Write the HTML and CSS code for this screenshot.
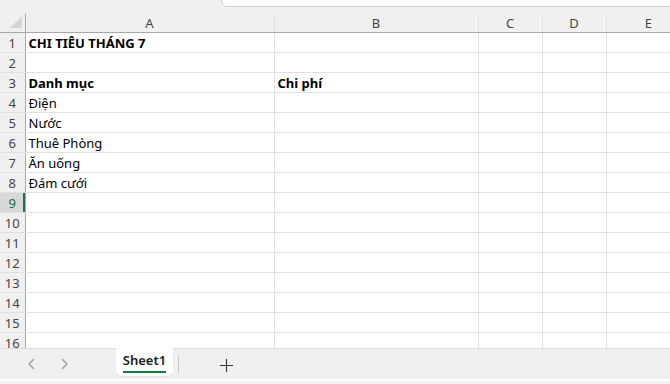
FILE: index.html
```html
<!DOCTYPE html>
<html lang="vi">
<head>
  <meta charset="UTF-8">
  <title>Sheet1</title>
  <link rel="stylesheet" href="styles.css">
</head>
<body>
  <div class="toolbar">
    <div class="search-box"></div>
  </div>

  <div class="grid-wrap">
    <table class="sheet">
      <colgroup>
        <col class="col-rh">
        <col class="col-a">
        <col class="col-b">
        <col class="col-c">
        <col class="col-d">
        <col class="col-e">
      </colgroup>
      <thead>
        <tr>
          <th class="corner"><span class="corner-tri"></span></th>
          <th>A</th>
          <th>B</th>
          <th>C</th>
          <th>D</th>
          <th>E</th>
        </tr>
      </thead>
      <tbody>
        <tr><th>1</th><td class="bold">CHI TIÊU THÁNG 7</td><td></td><td></td><td></td><td></td></tr>
        <tr><th>2</th><td></td><td></td><td></td><td></td><td></td></tr>
        <tr><th>3</th><td class="bold">Danh mục</td><td class="bold">Chi phí</td><td></td><td></td><td></td></tr>
        <tr><th>4</th><td>Điện</td><td></td><td></td><td></td><td></td></tr>
        <tr><th>5</th><td>Nước</td><td></td><td></td><td></td><td></td></tr>
        <tr><th>6</th><td>Thuê Phòng</td><td></td><td></td><td></td><td></td></tr>
        <tr><th>7</th><td>Ăn uống</td><td></td><td></td><td></td><td></td></tr>
        <tr><th>8</th><td>Đám cưới</td><td></td><td></td><td></td><td></td></tr>
        <tr class="active"><th>9</th><td></td><td></td><td></td><td></td><td></td></tr>
        <tr><th>10</th><td></td><td></td><td></td><td></td><td></td></tr>
        <tr><th>11</th><td></td><td></td><td></td><td></td><td></td></tr>
        <tr><th>12</th><td></td><td></td><td></td><td></td><td></td></tr>
        <tr><th>13</th><td></td><td></td><td></td><td></td><td></td></tr>
        <tr><th>14</th><td></td><td></td><td></td><td></td><td></td></tr>
        <tr><th>15</th><td></td><td></td><td></td><td></td><td></td></tr>
        <tr><th>16</th><td></td><td></td><td></td><td></td><td></td></tr>
      </tbody>
    </table>
  </div>

  <div class="tabbar">
    <div class="tab-nav">
      <svg width="10" height="12" viewBox="0 0 10 12"><path d="M7 1 L2 6 L7 11" fill="none" stroke="#9a9a9a" stroke-width="1.2"/></svg>
      <svg width="10" height="12" viewBox="0 0 10 12"><path d="M3 1 L8 6 L3 11" fill="none" stroke="#9a9a9a" stroke-width="1.2"/></svg>
    </div>
    <div class="tab"><span>Sheet1</span></div>
    <div class="tab-sep"></div>
    <div class="add-tab">
      <svg width="13" height="13" viewBox="0 0 13 13"><path d="M6.5 0 V13 M0 6.5 H13" stroke="#333" stroke-width="1.1"/></svg>
    </div>
  </div>
  <div class="statusbar"></div>
</body>
</html>
```

FILE: styles.css
```css
body {
  margin: 0;
  width: 670px;
  height: 384px;
  overflow: hidden;
  background: #f0f0f0;
  font-family: "Noto Sans", "Open Sans", sans-serif;
  font-size: 13px;
  color: #000;
}

.toolbar {
  height: 14px;
  background: #f0f0f0;
  position: relative;
}

.search-box {
  position: absolute;
  left: 221px;
  right: -10px;
  top: -10px;
  height: 15px;
  background: #fff;
  border: 1px solid #cfcfcf;
  border-radius: 0 0 0 6px;
}

.grid-wrap {
  height: 334px;
  overflow: hidden;
  background: #fff;
}

.sheet {
  border-collapse: collapse;
  table-layout: fixed;
  width: 690px;
  background: #fff;
}

.col-rh { width: 25px; }
.col-a { width: 249px; }
.col-b { width: 204px; }
.col-c { width: 64px; }
.col-d { width: 64px; }
.col-e { width: 84px; }

.sheet th,
.sheet td {
  box-sizing: border-box;
  padding: 0;
}

.sheet thead th {
  height: 18px;
  background: #f0f0f0;
  font-weight: normal;
  color: #444;
  line-height: 18px;
  border-left: 1px solid #e0e0e0;
  border-bottom: 1px solid #a8a8a8;
}

.sheet thead th.corner {
  border-left: none;
  border-right: 1px solid #a8a8a8;
  position: relative;
}

.corner-tri {
  position: absolute;
  right: 3px;
  bottom: 4px;
  width: 0;
  height: 0;
  border-left: 12px solid transparent;
  border-bottom: 12px solid #d5d5d5;
}

.sheet tbody th {
  height: 19px;
  background: #f0f0f0;
  font-weight: normal;
  color: #444;
  text-align: center;
  line-height: 18px;
  padding-top: 1px;
  border-right: 1px solid #a8a8a8;
  border-bottom: 1px solid #e0e0e0;
}

.sheet td {
  height: 19px;
  padding: 1px 3px 0;
  line-height: 18px;
  border-right: 1px solid #e0e0e0;
  border-bottom: 1px solid #e0e0e0;
  white-space: nowrap;
  overflow: hidden;
}

.sheet td.bold {
  font-weight: bold;
}

.sheet tr.active th {
  background: #d8d8d8;
  color: #1e6b44;
  box-shadow: inset -2px 0 0 #1e7145;
}

.tabbar {
  height: 30px;
  border-top: 1px solid #dcdcdc;
  display: flex;
  align-items: flex-start;
  background: #f0f0f0;
}

.tab-nav {
  display: flex;
  gap: 22px;
  padding: 9px 0 0 27px;
  width: 89px;
}

.tab {
  height: 28px;
  width: 57px;
  background: #fff;
  border-radius: 0 0 6px 6px;
  margin-top: -1px;
  display: flex;
  justify-content: center;
  box-shadow: 0 1px 1px rgba(0,0,0,0.08);
}

.tab span {
  font-weight: 600;
  line-height: 17px;
  padding-top: 4px;
  height: 19px;
  border-bottom: 2px solid #107c41;
  color: #222;
}

.tab-sep {
  width: 1px;
  height: 17px;
  background: #c8c8c8;
  margin: 7px 0 0 5px;
}

.add-tab {
  padding: 9px 0 0 41px;
}

.statusbar {
  height: 4px;
  border-top: 2px solid #fff;
  background: #f3f3f3;
}
```
